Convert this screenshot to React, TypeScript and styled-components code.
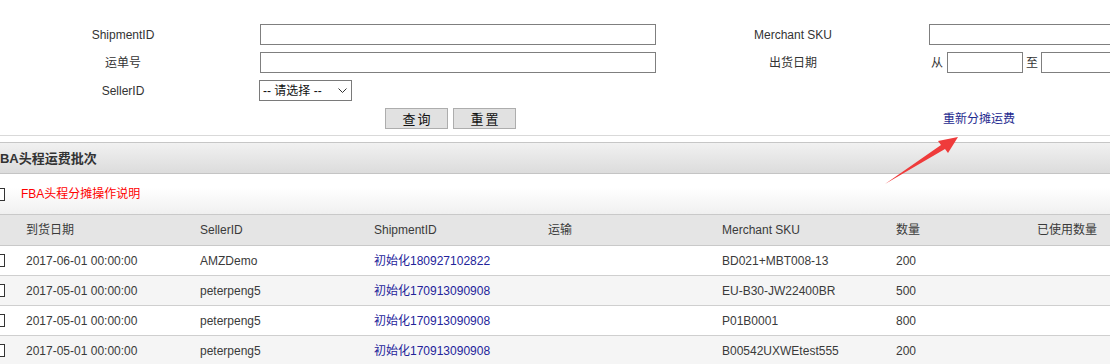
import React from "react";
import styled, { createGlobalStyle } from "styled-components";

const GlobalStyle = createGlobalStyle`
  html, body {
    margin: 0;
    padding: 0;
    background: #ffffff;
    overflow: hidden;
  }
  body {
    font-family: "Liberation Sans", Arial, "Noto Sans CJK SC", sans-serif;
    font-size: 12px;
    color: #333333;
  }
`;

const Page = styled.div`
  position: relative;
  margin-left: -18px;
  width: 1300px;
`;

const FilterForm = styled.div`
  display: grid;
  grid-template-columns: 278px 456px 213px 1fr;
  grid-auto-rows: 21px;
  row-gap: 7px;
  padding: 24px 0 6px;
  border-bottom: 1px solid #d9d9d9;
`;

const FieldLabel = styled.div<{ $side: "left" | "right" }>`
  display: flex;
  align-items: center;
  justify-content: center;
  padding-left: ${(p) => (p.$side === "left" ? "4px" : "0")};
  padding-right: ${(p) => (p.$side === "right" ? "59px" : "0")};
  color: #333333;
  font-size: 12px;
  line-height: 14px;
  white-space: nowrap;
`;

const FieldCell = styled.div<{ $pad?: number }>`
  display: flex;
  align-items: center;
  padding-left: ${(p) => p.$pad ?? 0}px;
  white-space: nowrap;
`;

const TextInput = styled.input<{ $w: number }>`
  box-sizing: border-box;
  width: ${(p) => p.$w}px;
  height: 21px;
  margin: 0;
  padding: 0 3px;
  border: 1px solid #7f7f7f;
  border-radius: 0;
  background: #ffffff;
  font: inherit;
  flex-shrink: 0;
`;

const RangeWord = styled.span<{ $gap: number }>`
  display: inline-block;
  width: 12px;
  margin-right: ${(p) => p.$gap}px;
  font-size: 12px;
  line-height: 14px;
  color: #333333;
`;

const SelectBox = styled.div`
  box-sizing: border-box;
  width: 93px;
  height: 21px;
  margin-left: -1px;
  display: flex;
  align-items: center;
  justify-content: space-between;
  padding: 0 4px 0 3px;
  border: 1px solid #7a7a7a;
  background: #ffffff;
  color: #111111;
  font-size: 12px;
  line-height: 14px;
`;

const ActionButton = styled.button`
  box-sizing: border-box;
  width: 63px;
  height: 21px;
  margin: 0 5px 0 0;
  padding: 0 0 0 2px;
  border: 1px solid #adadad;
  border-radius: 0;
  background: #e1e1e1;
  color: #111111;
  font-family: "Noto Sans CJK SC", sans-serif;
  font-size: 13px;
  line-height: 15px;
  letter-spacing: 2px;
`;

const NavLink = styled.a`
  color: #1e2a8f;
  font-size: 12px;
  line-height: 14px;
  text-decoration: none;
  cursor: pointer;
`;

const SectionHeader = styled.div`
  margin-top: 6px;
  height: 30px;
  display: flex;
  align-items: center;
  padding-left: 10px;
  border-top: 1px solid #c6c6c6;
  border-bottom: 1px solid #c4c4c4;
  background: linear-gradient(to bottom, #f1f1f1, #dcdcdc);
  color: #333333;
  font-weight: bold;
  font-size: 13px;
  line-height: 15px;
`;

const NoticeRow = styled.div`
  height: 40px;
  display: flex;
  align-items: center;
  padding-left: 10px;
  background: linear-gradient(to bottom, #ffffff 35%, #f0f0f0);
`;

const Box = styled.span`
  display: inline-block;
  box-sizing: border-box;
  width: 13px;
  height: 13px;
  border: 1px solid #333333;
  background: #ffffff;
  flex-shrink: 0;
`;

const NoticeText = styled.a`
  margin-left: 16px;
  color: #ff0000;
  font-size: 12px;
  line-height: 14px;
  text-decoration: none;
`;

const TableRow = styled.div<{ $kind: "head" | "odd" | "even" }>`
  display: grid;
  grid-template-columns: 39px repeat(5, 174px) 141px 1fr;
  height: ${(p) => (p.$kind === "head" ? "30px" : "29px")};
  border-top: ${(p) => (p.$kind === "head" ? "1px solid #c9c9c9" : "none")};
  border-bottom: 1px solid ${(p) => (p.$kind === "head" ? "#c9c9c9" : "#cfcfcf")};
  background: ${(p) =>
    p.$kind === "head" ? "#e5e5e5" : p.$kind === "even" ? "#f5f5f5" : "#ffffff"};
`;

const Cell = styled.div<{ $link?: boolean; $check?: boolean }>`
  display: flex;
  align-items: center;
  padding-left: ${(p) => (p.$check ? "10px" : "5px")};
  color: ${(p) => (p.$link ? "#23239a" : "#3a3a3a")};
  font-size: 12px;
  line-height: 14px;
  white-space: nowrap;
  overflow: visible;
`;

const ArrowMark = styled.svg`
  position: absolute;
  left: 898px;
  top: 132px;
  width: 84px;
  height: 58px;
  pointer-events: none;
`;

const headers = ["到货日期", "SellerID", "ShipmentID", "运输", "Merchant SKU", "数量", "已使用数量"];

const rows = [
  { date: "2017-06-01 00:00:00", seller: "AMZDemo", ship: "初始化180927102822", sku: "BD021+MBT008-13", qty: "200" },
  { date: "2017-05-01 00:00:00", seller: "peterpeng5", ship: "初始化170913090908", sku: "EU-B30-JW22400BR", qty: "500" },
  { date: "2017-05-01 00:00:00", seller: "peterpeng5", ship: "初始化170913090908", sku: "P01B0001", qty: "800" },
  { date: "2017-05-01 00:00:00", seller: "peterpeng5", ship: "初始化170913090908", sku: "B00542UXWEtest555", qty: "200" },
];

export default function App() {
  return (
    <>
      <GlobalStyle />
      <Page>
        <FilterForm>
          <FieldLabel $side="left">ShipmentID</FieldLabel>
          <FieldCell>
            <TextInput $w={396} />
          </FieldCell>
          <FieldLabel $side="right">Merchant SKU</FieldLabel>
          <FieldCell>
            <TextInput $w={396} />
          </FieldCell>

          <FieldLabel $side="left">运单号</FieldLabel>
          <FieldCell>
            <TextInput $w={396} />
          </FieldCell>
          <FieldLabel $side="right">出货日期</FieldLabel>
          <FieldCell $pad={2}>
            <RangeWord $gap={4}>从</RangeWord>
            <TextInput $w={76} />
            <RangeWord $gap={3} style={{ marginLeft: 3 }}>至</RangeWord>
            <TextInput $w={120} />
          </FieldCell>

          <FieldLabel $side="left">SellerID</FieldLabel>
          <FieldCell>
            <SelectBox role="listbox">
              <span>-- 请选择 --</span>
              <svg width="9" height="5" viewBox="0 0 9 5">
                <polyline points="0.5,0.5 4.5,4.5 8.5,0.5" fill="none" stroke="#333" strokeWidth="1" />
              </svg>
            </SelectBox>
          </FieldCell>
          <div />
          <div />

          <div />
          <FieldCell $pad={125}>
            <ActionButton>查询</ActionButton>
            <ActionButton>重置</ActionButton>
          </FieldCell>
          <div />
          <FieldCell $pad={14}>
            <NavLink>重新分摊运费</NavLink>
          </FieldCell>
        </FilterForm>

        <SectionHeader>FBA头程运费批次</SectionHeader>
        <NoticeRow>
          <Box />
          <NoticeText>FBA头程分摊操作说明</NoticeText>
        </NoticeRow>

        <TableRow $kind="head">
          <Cell $check />
          {headers.map((h) => (
            <Cell key={h}>{h}</Cell>
          ))}
        </TableRow>
        {rows.map((r, i) => (
          <TableRow key={i} $kind={i % 2 === 0 ? "odd" : "even"}>
            <Cell $check>
              <Box />
            </Cell>
            <Cell>{r.date}</Cell>
            <Cell>{r.seller}</Cell>
            <Cell $link>{r.ship}</Cell>
            <Cell />
            <Cell>{r.sku}</Cell>
            <Cell>{r.qty}</Cell>
            <Cell />
          </TableRow>
        ))}

        <ArrowMark viewBox="0 0 84 58">
          <polygon points="5,52 61,13 58,9 78,5 68,21 65,17" fill="#ef3b3b" />
        </ArrowMark>
      </Page>
    </>
  );
}
